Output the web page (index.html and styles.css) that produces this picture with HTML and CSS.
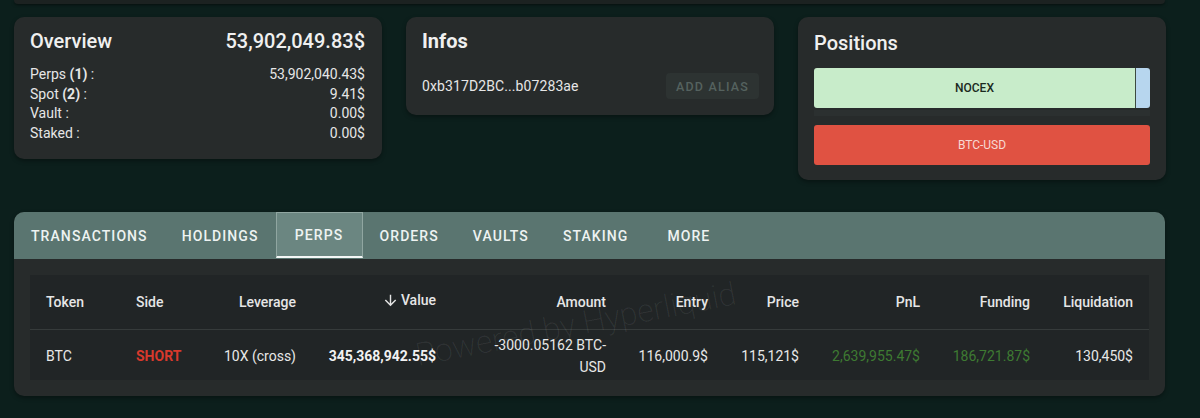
FILE: index.html
```html
<!DOCTYPE html>
<html>
<head>
<meta charset="utf-8">
<link rel="stylesheet" href="styles.css">
</head>
<body>
<div class="page">
  <div class="prev-card"></div>
  <div class="top-row">
    <section class="card overview">
      <div class="ov-head">
        <span class="ov-title">Overview</span>
        <span class="ov-total">53,902,049.83$</span>
      </div>
      <div class="ov-rows">
        <div class="ov-row"><span>Perps <b>(1)</b> :</span><span>53,902,040.43$</span></div>
        <div class="ov-row"><span>Spot <b>(2)</b> :</span><span>9.41$</span></div>
        <div class="ov-row"><span>Vault :</span><span>0.00$</span></div>
        <div class="ov-row"><span>Staked :</span><span>0.00$</span></div>
      </div>
    </section>
    <section class="card infos">
      <div class="infos-title">Infos</div>
      <div class="infos-row">
        <span class="addr">0xb317D2BC...b07283ae</span>
        <button class="alias-btn">ADD ALIAS</button>
      </div>
    </section>
    <section class="card positions">
      <div class="pos-title">Positions</div>
      <div class="pos-bar">
        <div class="seg seg-green">NOCEX</div>
        <div class="seg seg-blue"></div>
      </div>
      <div class="pos-sep"></div>
      <div class="pos-bar">
        <div class="seg seg-red">BTC-USD</div>
      </div>
    </section>
  </div>

  <section class="main-card">
    <nav class="tabs">
      <div class="tab">TRANSACTIONS</div>
      <div class="tab">HOLDINGS</div>
      <div class="tab active">PERPS</div>
      <div class="tab">ORDERS</div>
      <div class="tab">VAULTS</div>
      <div class="tab">STAKING</div>
      <div class="tab">MORE</div>
    </nav>
    <div class="panel">
      <table class="perps">
        <colgroup>
          <col class="c-token"><col class="c-side"><col class="c-lev"><col class="c-value"><col class="c-amount">
          <col class="c-entry"><col class="c-price"><col class="c-pnl"><col class="c-funding"><col class="c-liq">
        </colgroup>
        <thead>
          <tr>
            <th class="l">Token</th>
            <th class="l">Side</th>
            <th>Leverage</th>
            <th><span class="sort"><svg class="arrow" viewBox="0 0 24 24" width="17" height="17"><path d="M20 12l-1.41-1.41L13 16.17V4h-2v12.17l-5.58-5.59L4 12l8 8 8-8z" fill="#e4e4e4"/></svg>Value</span></th>
            <th>Amount</th>
            <th>Entry</th>
            <th>Price</th>
            <th>PnL</th>
            <th>Funding</th>
            <th>Liquidation</th>
          </tr>
        </thead>
        <tbody>
          <tr>
            <td class="l">BTC</td>
            <td class="l side-short">SHORT</td>
            <td>10X (cross)</td>
            <td class="val-bold">345,368,942.55$</td>
            <td>-3000.05162 BTC-USD</td>
            <td>116,000.9$</td>
            <td>115,121$</td>
            <td class="val-green">2,639,955.47$</td>
            <td class="val-green">186,721.87$</td>
            <td>130,450$</td>
          </tr>
        </tbody>
      </table>
      <div class="watermark">Powered by Hyperliquid</div>
    </div>
  </section>
</div>
</body>
</html>
```

FILE: styles.css
```css
* { box-sizing: border-box; }
html, body {
  margin: 0;
  padding: 0;
  background: #0c1f1c;
  font-family: Roboto, "Liberation Sans", Arial, sans-serif;
  color: #e8e8e8;
}
.page {
  width: 1200px;
  height: 418px;
  padding-left: 14px;
  overflow: hidden;
}
.prev-card {
  width: 1151px;
  height: 4px;
  background: #1c2221;
  border-radius: 0 0 10px 10px;
  box-shadow: 0 1px 3px rgba(0,0,0,0.5);
}
.top-row {
  display: flex;
  gap: 24px;
  align-items: flex-start;
  margin-top: 13px;
}
.card {
  width: 368px;
  background: #272b2b;
  border-radius: 10px;
  box-shadow: 0 2px 4px rgba(0,0,0,0.35);
}

/* Overview */
.overview { padding: 12px 17px 16px 16px; }
.ov-head {
  display: flex;
  justify-content: space-between;
  align-items: center;
  height: 24px;
  font-size: 20px;
  font-weight: 500;
  color: #f0f0f0;
}
.ov-rows { margin-top: 12px; }
.ov-row {
  display: flex;
  justify-content: space-between;
  font-size: 14px;
  line-height: 19.6px;
  color: #e6e6e6;
}
.ov-row b { font-weight: 700; }

/* Infos */
.infos { padding: 12px 16px 16px 16px; }
.infos-title {
  height: 24px;
  line-height: 24px;
  font-size: 20px;
  font-weight: 700;
  color: #f0f0f0;
}
.infos-row {
  margin-top: 20px;
  display: flex;
  justify-content: space-between;
  align-items: center;
}
.addr { font-size: 14px; color: #e6e6e6; letter-spacing: 0.1px; }
.alias-btn {
  height: 26px;
  width: 93px;
  margin-right: -1px;
  border: none;
  border-radius: 4px;
  background: #2d3332;
  color: #55625f;
  font-family: Roboto, "Liberation Sans", Arial, sans-serif;
  font-size: 12.5px;
  font-weight: 500;
  letter-spacing: 1.2px;
  padding: 0;
}

/* Positions */
.positions { padding: 14px 16px 15px 16px; }
.pos-title {
  height: 24px;
  line-height: 24px;
  font-size: 20px;
  font-weight: 500;
  color: #f0f0f0;
}
.pos-bar {
  display: flex;
  height: 40px;
  border-radius: 3px;
  overflow: hidden;
}
.pos-title + .pos-bar { margin-top: 13px; }
.pos-sep {
  height: 17px;
  background: linear-gradient(#272b2b 0 2px, #2b3030 2px 8px, #272b2b 8px);
}
.seg {
  display: flex;
  align-items: center;
  justify-content: center;
  font-size: 12px;
}
.seg-green { flex: 0 0 322px; background: #c8ecca; color: #1b2a1e; font-weight: 500; border-right: 1px solid #3c4a40; }
.seg-blue { flex: 1; background: #b7d6ee; }
.seg-red { flex: 1; background: #e05242; color: #f7d9d3; }

/* Main card */
.main-card {
  margin-top: 32px;
  width: 1151px;
  background: #272b2b;
  border-radius: 10px;
  padding-bottom: 16px;
  box-shadow: 0 2px 4px rgba(0,0,0,0.35);
}
.tabs {
  display: flex;
  height: 47px;
  background: #5a7570;
  border-radius: 10px 10px 0 0;
}
.tab {
  min-width: 87px;
  padding: 0 17px;
  display: flex;
  align-items: center;
  justify-content: center;
  font-size: 14px;
  font-weight: 500;
  letter-spacing: 1.08px;
  color: #eef3f2;
}
.tab.active {
  background: #6b8681;
  border: 1px solid #90a6a1;
  border-bottom: 2px solid #f4f7f6;
  height: 46px;
}
.panel {
  position: relative;
  margin: 16px 16px 0 16px;
  background: #212526;
  height: 105px;
}
.perps {
  width: 1119px;
  border-collapse: collapse;
  table-layout: fixed;
}
.c-token { width: 90px; }
.c-side { width: 84px; }
.c-lev { width: 108px; }
.c-value { width: 140px; }
.c-amount { width: 170px; }
.c-entry { width: 102px; }
.c-price { width: 91px; }
.c-pnl { width: 121px; }
.c-funding { width: 110px; }
.c-liq { width: 103px; }
.perps th, .perps td {
  text-align: right;
  padding: 0 16px;
  font-size: 14px;
}
.perps th {
  height: 54px;
  font-weight: 500;
  color: #e6e6e6;
  border-bottom: 1px solid #363b3b;
}
.perps td {
  height: 51px;
  line-height: 22px;
  color: #e8e8e8;
  padding-top: 2px;
}
.perps .l { text-align: left; }
.sort { display: inline-flex; align-items: center; gap: 2px; }
.arrow { display: block; }
.perps td.side-short { color: #d8392c; font-weight: 700; }
.perps td.val-bold { font-weight: 700; color: #f2f2f2; }
.perps td.val-green { color: #3e7a32; }
.watermark {
  position: absolute;
  left: 388px;
  top: 64px;
  font-size: 32px;
  line-height: 1;
  font-weight: 200;
  color: rgba(255,255,255,0.075);
  transform: rotate(-11deg);
  transform-origin: 0 27px;
  white-space: nowrap;
  pointer-events: none;
}
```
